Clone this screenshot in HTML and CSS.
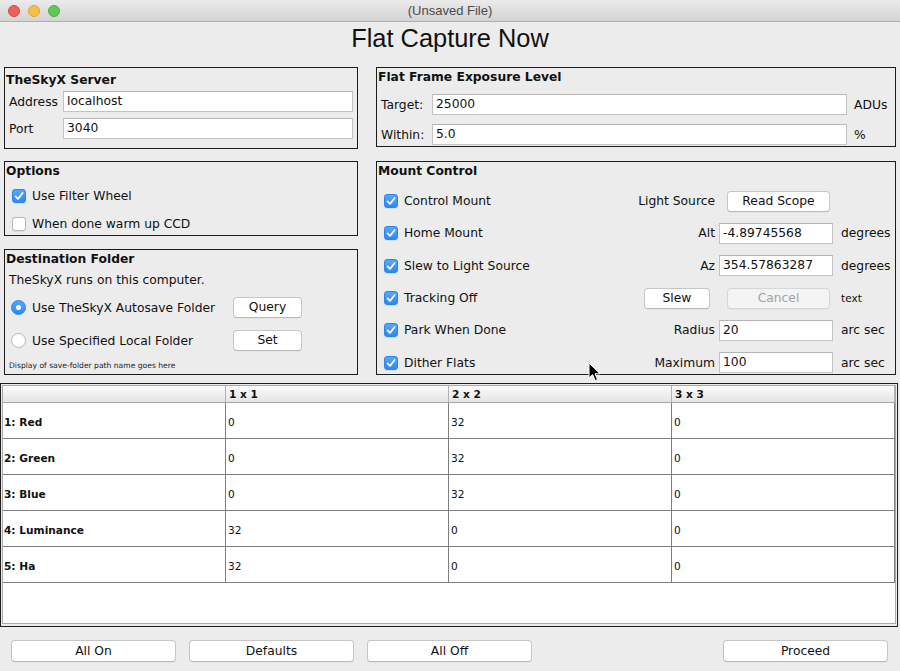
FILE: index.html
```html
<!DOCTYPE html>
<html>
<head>
<meta charset="utf-8">
<title>Flat Capture Now</title>
<link rel="stylesheet" href="styles.css">
</head>
<body>
<div class="titlebar">
  <div class="lights">
    <span class="light red"></span>
    <span class="light yellow"></span>
    <span class="light green"></span>
  </div>
  <div class="wtitle">(Unsaved File)</div>
  <div></div>
</div>

<h1 class="heading">Flat Capture Now</h1>

<div class="panels">
  <div class="col">
    <section class="panel server">
      <div class="ptitle">TheSkyX Server</div>
      <div class="field-grid">
        <span class="flabel">Address</span><div class="input">localhost</div>
        <span class="flabel">Port</span><div class="input">3040</div>
      </div>
    </section>

    <section class="panel options">
      <div class="ptitle">Options</div>
      <div class="checks">
        <div class="crow"><span class="cb on"><svg viewBox="0 0 14 14" width="14" height="14"><path d="M3.6 7.4 L6 9.9 L10.6 3.9" fill="none" stroke="#fff" stroke-width="1.7" stroke-linecap="round" stroke-linejoin="round"/></svg></span><span>Use Filter Wheel</span></div>
        <div class="crow"><span class="cb"></span><span>When done warm up CCD</span></div>
      </div>
    </section>

    <section class="panel dest">
      <div class="ptitle">Destination Folder</div>
      <div class="dtext">TheSkyX runs on this computer.</div>
      <div class="rgrid">
        <div class="rrow"><span class="radio on"><span class="dot"></span></span><span>Use TheSkyX Autosave Folder</span></div>
        <button class="btn qbtn">Query</button>
        <div class="rrow r2"><span class="radio"></span><span>Use Specified Local Folder</span></div>
        <button class="btn qbtn r2">Set</button>
      </div>
      <div class="small">Display of save-folder path name goes here</div>
    </section>
  </div>

  <div class="col">
    <section class="panel expo">
      <div class="ptitle">Flat Frame Exposure Level</div>
      <div class="egrid">
        <span>Target:</span><div class="input">25000</div><span class="unit">ADUs</span>
        <span>Within:</span><div class="input">5.0</div><span class="unit">%</span>
      </div>
    </section>

    <section class="panel mount">
      <div class="ptitle">Mount Control</div>
      <div class="mgrid">
        <div class="crow"><span class="cb on"><svg viewBox="0 0 14 14" width="14" height="14"><path d="M3.6 7.4 L6 9.9 L10.6 3.9" fill="none" stroke="#fff" stroke-width="1.7" stroke-linecap="round" stroke-linejoin="round"/></svg></span><span>Control Mount</span></div>
        <span class="rlabel">Light Source</span>
        <div class="ctrl"><button class="btn mbtn">Read Scope</button></div>
        <span class="munit"></span>

        <div class="crow"><span class="cb on"><svg viewBox="0 0 14 14" width="14" height="14"><path d="M3.6 7.4 L6 9.9 L10.6 3.9" fill="none" stroke="#fff" stroke-width="1.7" stroke-linecap="round" stroke-linejoin="round"/></svg></span><span>Home Mount</span></div>
        <span class="rlabel">Alt</span>
        <div class="ctrl"><div class="input minput">-4.89745568</div></div>
        <span class="munit">degrees</span>

        <div class="crow"><span class="cb on"><svg viewBox="0 0 14 14" width="14" height="14"><path d="M3.6 7.4 L6 9.9 L10.6 3.9" fill="none" stroke="#fff" stroke-width="1.7" stroke-linecap="round" stroke-linejoin="round"/></svg></span><span>Slew to Light Source</span></div>
        <span class="rlabel">Az</span>
        <div class="ctrl"><div class="input minput">354.57863287</div></div>
        <span class="munit">degrees</span>

        <div class="crow"><span class="cb on"><svg viewBox="0 0 14 14" width="14" height="14"><path d="M3.6 7.4 L6 9.9 L10.6 3.9" fill="none" stroke="#fff" stroke-width="1.7" stroke-linecap="round" stroke-linejoin="round"/></svg></span><span>Tracking Off</span></div>
        <button class="btn slew">Slew</button>
        <div class="ctrl"><button class="btn mbtn disabled">Cancel</button></div>
        <span class="munit tiny">text</span>

        <div class="crow"><span class="cb on"><svg viewBox="0 0 14 14" width="14" height="14"><path d="M3.6 7.4 L6 9.9 L10.6 3.9" fill="none" stroke="#fff" stroke-width="1.7" stroke-linecap="round" stroke-linejoin="round"/></svg></span><span>Park When Done</span></div>
        <span class="rlabel">Radius</span>
        <div class="ctrl"><div class="input minput">20</div></div>
        <span class="munit">arc sec</span>

        <div class="crow"><span class="cb on"><svg viewBox="0 0 14 14" width="14" height="14"><path d="M3.6 7.4 L6 9.9 L10.6 3.9" fill="none" stroke="#fff" stroke-width="1.7" stroke-linecap="round" stroke-linejoin="round"/></svg></span><span>Dither Flats</span></div>
        <span class="rlabel">Maximum</span>
        <div class="ctrl"><div class="input minput">100</div></div>
        <span class="munit">arc sec</span>
      </div>
    </section>
  </div>
</div>

<div class="table-wrap">
  <div class="table">
    <div class="trow head">
      <div class="cell"></div><div class="cell">1 x 1</div><div class="cell">2 x 2</div><div class="cell">3 x 3</div>
    </div>
    <div class="trow"><div class="cell rh">1: Red</div><div class="cell">0</div><div class="cell">32</div><div class="cell">0</div></div>
    <div class="trow"><div class="cell rh">2: Green</div><div class="cell">0</div><div class="cell">32</div><div class="cell">0</div></div>
    <div class="trow"><div class="cell rh">3: Blue</div><div class="cell">0</div><div class="cell">32</div><div class="cell">0</div></div>
    <div class="trow"><div class="cell rh">4: Luminance</div><div class="cell">32</div><div class="cell">0</div><div class="cell">0</div></div>
    <div class="trow"><div class="cell rh">5: Ha</div><div class="cell">32</div><div class="cell">0</div><div class="cell">0</div></div>
  </div>
</div>

<div class="bottom">
  <button class="btn wide">All On</button>
  <button class="btn wide">Defaults</button>
  <button class="btn wide">All Off</button>
  <button class="btn wide proceed">Proceed</button>
</div>

<svg class="cursor" width="14" height="22" viewBox="0 0 14 22"><path d="M1 1 L1 16 L4.6 12.6 L7.2 18.6 L9.6 17.6 L7 11.8 L12 11.8 Z" fill="#000" stroke="#fff" stroke-width="1" stroke-linejoin="round"/></svg>
</body>
</html>
```

FILE: styles.css
```css
* { box-sizing: border-box; }
html, body { margin: 0; padding: 0; }
body {
  width: 900px;
  height: 671px;
  background: #ececec;
  font-family: "DejaVu Sans", sans-serif;
  font-size: 12.3px;
  color: #111;
  overflow: hidden;
  position: relative;
}

/* title bar */
.titlebar {
  height: 22px;
  background: linear-gradient(#ebebeb, #d3d3d3);
  border-bottom: 1px solid #b0b0b0;
  display: grid;
  grid-template-columns: 1fr auto 1fr;
  align-items: center;
}
.lights { display: flex; gap: 8px; padding-left: 8px; padding-top: 0; }
.light { width: 12px; height: 12px; border-radius: 50%; display: block; }
.red { background: #ec5f5a; border: 1px solid #d9473f; }
.yellow { background: #f5c04a; border: 1px solid #dea236; }
.green { background: #62c655; border: 1px solid #4fad3f; }
.wtitle {
  font-family: "Liberation Sans", Arial, sans-serif;
  font-size: 13px;
  color: #4b4b4b;
}

.heading {
  margin: 0;
  height: 45px;
  line-height: 32px;
  font-family: "Liberation Sans", Arial, sans-serif;
  font-size: 25.4px;
  font-weight: normal;
  text-align: center;
  color: #111;
}

/* panels */
.panels {
  display: grid;
  grid-template-columns: 354px 520px;
  column-gap: 18px;
  padding-left: 4px;
  height: 308px;
}
.col { display: flex; flex-direction: column; }
.panel { border: 1px solid #1c1c1c; }
.ptitle { font-weight: bold; line-height: 18px; padding-left: 1px; }

.server { height: 82px; }
.server .ptitle { padding-top: 3px; }
.field-grid {
  display: grid;
  grid-template-columns: 54px 1fr;
  grid-auto-rows: 21px;
  row-gap: 6px;
  align-items: center;
  margin-top: 2px;
  padding: 0 4px;
}
.input {
  height: 21px;
  background: #fff;
  border: 1px solid #c3c3c3;
  border-top-color: #b4b4b4;
  line-height: 19px;
  padding: 0 3px;
  white-space: nowrap;
  overflow: hidden;
}

.options { height: 75px; margin-top: 12px; }
.checks { display: flex; flex-direction: column; gap: 8px; margin-top: 6px; padding-left: 7px; }
.crow { display: flex; align-items: center; gap: 6px; height: 20px; white-space: nowrap; }
.cb {
  width: 14px; height: 14px; flex: none;
  border-radius: 3px;
  background: #fff;
  border: 1px solid #b8b8b8;
  box-shadow: 0 0.5px 1px rgba(0,0,0,0.08);
  display: block;
}
.cb svg { display: block; margin: -1px; }
.cb.on { background: linear-gradient(#56a6fb, #2f89f3); border-color: #2f84e8; }

.dest { height: 126px; margin-top: 13px; }
.dtext { line-height: 18px; margin-top: 3px; padding-left: 4px; }
.rgrid {
  display: grid;
  grid-template-columns: 222px 69px;
  grid-template-rows: 21px 21px;
  row-gap: 12px;
  align-items: center;
  margin-top: 8px;
  padding-left: 6px;
}
.rrow { display: flex; align-items: center; gap: 6px; white-space: nowrap; }
.radio {
  width: 15px; height: 15px; flex: none;
  border-radius: 50%;
  background: #fff;
  border: 1px solid #b8b8b8;
  display: flex; align-items: center; justify-content: center;
}
.radio.on { background: linear-gradient(#56a6fb, #2f89f3); border-color: #2f84e8; }
.dot { width: 5px; height: 5px; border-radius: 50%; background: #fff; display: block; }
.small { font-size: 7.6px; line-height: 12px; margin-top: 9px; padding-left: 4px; color: #222; }

.btn {
  font-family: inherit;
  font-size: 12.3px;
  color: #111;
  background: #fff;
  border: 1px solid #c6c6c6;
  border-bottom-color: #b9b9b9;
  border-radius: 4px;
  height: 21px;
  padding: 0;
  line-height: 19px;
  text-align: center;
  box-shadow: 0 0.5px 0 rgba(0,0,0,0.06);
}
.qbtn { width: 69px; }
.btn.disabled { background: #f4f4f4; color: #a3a3a3; border-color: #d6d6d6; }

.expo { height: 80px; }
.egrid {
  display: grid;
  grid-template-columns: 51px 415px auto;
  grid-auto-rows: 21px;
  row-gap: 9px;
  align-items: center;
  margin-top: 8px;
  padding-left: 4px;
}
.unit { padding-left: 7px; }

.mount { height: 214px; margin-top: 14px; }
.mgrid {
  display: grid;
  grid-template-columns: auto 1fr 118px 62px;
  grid-auto-rows: 32.3px;
  align-items: center;
  margin-top: 5px;
  padding-left: 7px;
}
.rlabel { text-align: right; white-space: nowrap; }
.ctrl { display: flex; }
.minput { width: 114px; margin-left: 4px; }
.mbtn { width: 103px; margin-left: 12px; }
.slew { width: 66px; justify-self: end; margin-right: 5px; }
.munit { padding-left: 8px; white-space: nowrap; }
.munit.tiny { font-size: 10.6px; }

/* table */
.table-wrap {
  margin-top: 8px;
  width: 898px;
  height: 244px;
  border: 1px solid #1e1e1e;
  padding: 1px 1px 2px 1px;
}
.table {
  height: 100%;
  background: #fff;
  border: 1px solid #a9a9a9;
}
.trow {
  display: grid;
  grid-template-columns: 223px 223px 223px 223px;
  height: 36px;
  border-bottom: 1px solid #7f7f7f;
  font-size: 10.6px;
}
.trow .cell {
  border-right: 1px solid #7f7f7f;
  padding-left: 2px;
  display: flex;
  align-items: center;
  padding-top: 2px;
  color: #111;
}
.trow .cell.rh { font-weight: bold; padding-left: 1px; }
.trow.head {
  height: 17px;
  background: linear-gradient(#fbfbfb, #e4e4e4);
  border-bottom: 1px solid #a6a6a6;
  font-weight: bold;
}
.trow.head .cell { border-right-color: #b3b3b3; padding-left: 3px; padding-top: 0; }

/* bottom buttons */
.bottom {
  display: flex;
  gap: 13px;
  padding: 13px 12px 0 11px;
}
.wide { width: 165px; height: 22px; line-height: 20px; }
.proceed { margin-left: auto; }

.cursor { position: absolute; left: 588px; top: 362px; }
```
